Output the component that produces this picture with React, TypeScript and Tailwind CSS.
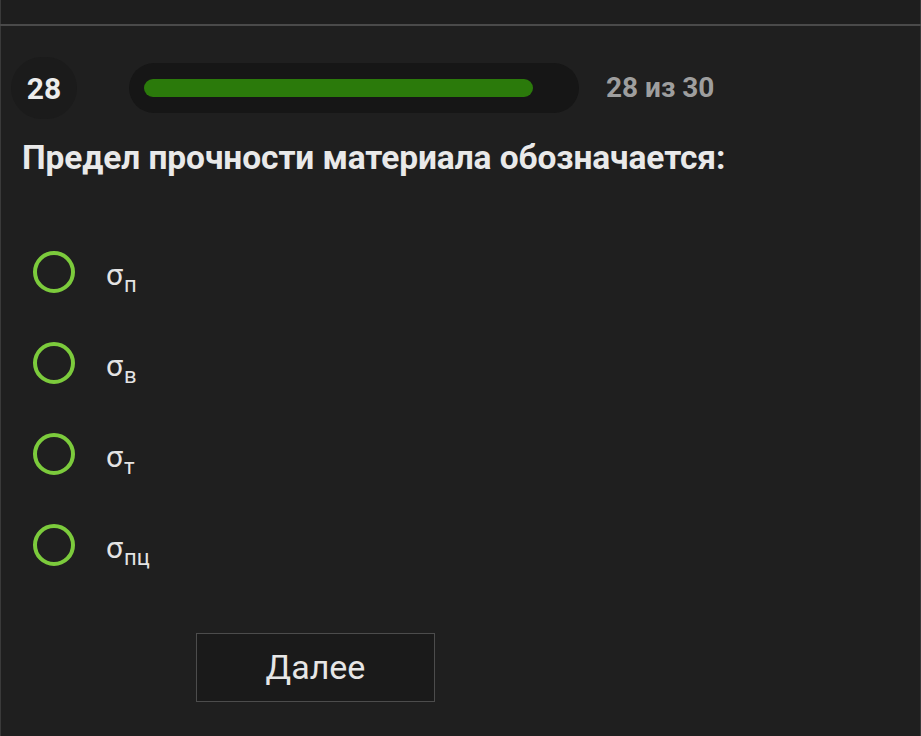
import React from 'react'

const options = [
  { base: 'σ', sub: 'п' },
  { base: 'σ', sub: 'в' },
  { base: 'σ', sub: 'т' },
  { base: 'σ', sub: 'пц' },
]

export default function App() {
  return (
    <div
      className="w-[921px] h-[736px] bg-[#1f1f1f] flex flex-col overflow-hidden"
      style={{ fontFamily: 'Roboto, "Noto Sans", sans-serif' }}
    >
      <div className="h-[24px] border-x border-[#3a3a3a] bg-[#1e1e1e]" />
      <div className="h-[2px] bg-[#4a4a4a]" />
      <div className="flex-1 border-x border-[#3a3a3a] flex flex-col">
        {/* progress row */}
        <div className="flex items-center h-[60px] mt-[32px] pl-[10px]">
          <div className="w-[66px] h-[62px] rounded-full bg-[#1b1b1b] flex items-center justify-center text-[30px] font-bold text-[#ececec]">
            28
          </div>
          <div className="ml-[52px] w-[450px] h-[50px] rounded-full bg-[#161616] flex items-center px-[15px]">
            <div className="h-[18px] w-[389px] rounded-full bg-[#2b7a0b]" />
          </div>
          <div className="ml-[27px] text-[28px] font-bold text-[#9e9e9e]">28 из 30</div>
        </div>

        <h1 className="mt-[18px] ml-[21px] text-[33.5px] font-bold text-[#e9e9e9] leading-[44px] tracking-[-0.1px]">
          Предел прочности материала обозначается:
        </h1>

        <div className="mt-[71px] flex flex-col gap-[49px] pl-[32px]">
          {options.map((o, i) => (
            <label key={i} className="flex items-center h-[42px]">
              <span className="w-[42px] h-[42px] rounded-full border-[4px] border-[#7ccb3c]" />
              <span className="ml-[31px] text-[30px] text-[#e4e4e4] leading-none mt-[6px]">
                {o.base}
                <span className="relative top-[7px] text-[22px] ml-[1px]">{o.sub}</span>
              </span>
            </label>
          ))}
        </div>

        <button className="mt-[67px] ml-[195px] w-[239px] h-[69px] border border-[#4c4c4c] bg-[#1a1a1a] text-[34px] text-[#e6e6e6]">
          Далее
        </button>
      </div>
    </div>
  )
}
